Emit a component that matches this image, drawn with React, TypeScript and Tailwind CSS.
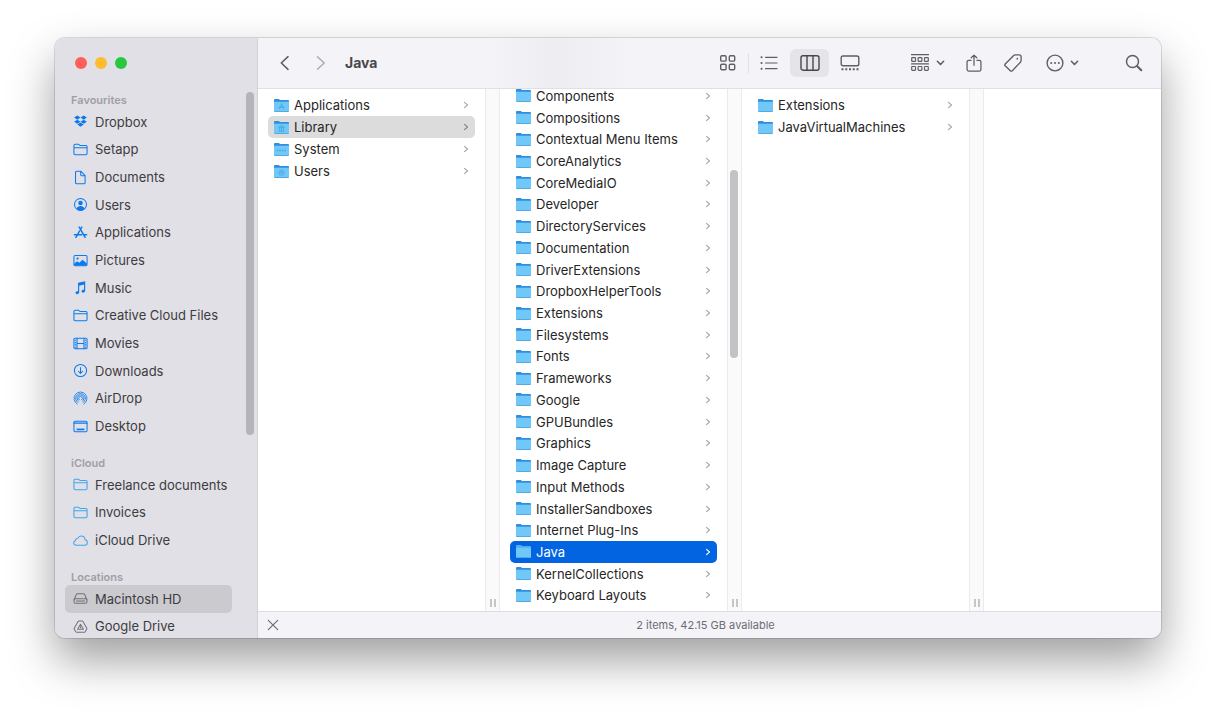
import type { ReactNode } from "react";
import clsx from "clsx";

type IconProps = { className?: string };
type FolderGlyph = "apps" | "library" | "system" | "users";
type Entry = { name: string; glyph?: FolderGlyph };

function Stroke({ className, children, box = 16, width = 1.1 }: IconProps & { children: ReactNode; box?: number; width?: number }) {
  return (
    <svg
      viewBox={`0 0 ${box} ${box}`}
      className={className}
      fill="none"
      stroke="currentColor"
      strokeWidth={width}
      strokeLinecap="round"
      strokeLinejoin="round"
      aria-hidden="true"
    >
      {children}
    </svg>
  );
}

const DropboxIcon = (p: IconProps) => (
  <svg viewBox="0 0 16 16" className={p.className} fill="currentColor" aria-hidden="true">
    <path d="M4.6 1.6 8 3.8 4.6 6 1.2 3.8zM11.4 1.6 14.8 3.8 11.4 6 8 3.8zM4.6 6.1 8 8.3 4.6 10.5 1.2 8.3zM11.4 6.1 14.8 8.3 11.4 10.5 8 8.3zM4.6 11.3 8 9.1l3.4 2.2L8 13.5z" />
  </svg>
);

const FolderOutline = (p: IconProps) => (
  <Stroke {...p}>
    <path d="M1 4V12.3c0 .8.4 1.2 1.2 1.2H13.8c.8 0 1.2-.4 1.2-1.2V4.9c0-.8-.4-1.2-1.2-1.2H7.4L6 2.5H2.2C1.4 2.5 1 2.9 1 3.7zM1 6.2H15" />
  </Stroke>
);

const DocIcon = (p: IconProps) => (
  <Stroke {...p}>
    <path d="M3.9 1.3H8.3L12.9 6V13.5c0 .8-.4 1.2-1.2 1.2H3.9c-.8 0-1.2-.4-1.2-1.2V2.5c0-.8.4-1.2 1.2-1.2zM8.2 1.5V5.1c0 .7.3 1 1 1h3.5" />
  </Stroke>
);

const UserIcon = (p: IconProps) => (
  <Stroke {...p}>
    <circle cx="8" cy="8" r="6.4" />
    <circle cx="8" cy="6.3" r="2.4" fill="currentColor" stroke="none" />
    <path d="M3.6 12.4C4.3 10.4 6 9.5 8 9.5s3.7.9 4.4 2.9C11.2 13.7 9.7 14.4 8 14.4s-3.2-.7-4.4-2z" fill="currentColor" stroke="none" />
  </Stroke>
);

const AppsIcon = (p: IconProps) => (
  <Stroke {...p} width={1.6}>
    <path d="M6.6 2.2 12.9 13.3M9.4 2.2 8 4.6M7 6.4 3.1 13.3M1.5 10.4H9.2M12.2 10.4H14.5" />
  </Stroke>
);

const PicturesIcon = (p: IconProps) => (
  <Stroke {...p}>
    <rect x="1" y="2.7" width="14" height="10.8" rx="1.2" />
    <circle cx="4.8" cy="5.9" r="1.2" fill="currentColor" stroke="none" />
    <path d="M1.2 13V11.5L4.4 8.7 6.6 10.5 10.2 7.2 14.8 11.2V13.3H1.4z" fill="currentColor" stroke="none" />
  </Stroke>
);

const MusicIcon = (p: IconProps) => (
  <svg viewBox="0 0 16 16" className={p.className} fill="currentColor" aria-hidden="true">
    <path d="M5.4 3 13 1.2v10c0 1.4-1 2.3-2.3 2.3-1 0-1.6-.6-1.6-1.4 0-1 .8-1.5 1.8-1.7.7-.1.9-.3.9-.9V4.8L6.6 6v6.8c0 1.4-1 2.3-2.3 2.3-1 0-1.6-.6-1.6-1.4 0-1 .8-1.5 1.8-1.7.7-.1.9-.3.9-.9z" />
  </svg>
);

const MoviesIcon = (p: IconProps) => (
  <Stroke {...p}>
    <rect x="1" y="2.4" width="14" height="11.2" rx="1.2" />
    <path d="M4.3 2.4V13.6M11.7 2.4V13.6M4.3 8H11.7" />
    <path d="M2.7 3.9V12.8M13.3 3.9V12.8" strokeWidth="1.4" strokeDasharray="1.2 1.3" strokeLinecap="butt" />
  </Stroke>
);

const DownloadsIcon = (p: IconProps) => (
  <Stroke {...p}>
    <circle cx="8" cy="8" r="6.5" />
    <path d="M8 4.7V11M5.6 8.8 8 11.1l2.4-2.3" />
  </Stroke>
);

const AirDropIcon = (p: IconProps) => (
  <Stroke {...p} width={0.9}>
    <path d="M4.4 13.9A6.9 6.9 0 1 1 11.6 13.9M5.1 12.3A5.2 5.2 0 1 1 10.9 12.3M5.9 10.8A3.6 3.6 0 1 1 10.1 10.8M6.7 9.4A2 2 0 1 1 9.3 9.4" />
  </Stroke>
);

const DesktopIcon = (p: IconProps) => (
  <Stroke {...p}>
    <rect x="1" y="2.5" width="14" height="11" rx="1.2" />
    <path d="M1 4.4H15" />
    <path d="M3.8 11.1H12.2" strokeWidth="1.8" strokeLinecap="butt" />
  </Stroke>
);

const CloudIcon = (p: IconProps) => (
  <Stroke {...p}>
    <path d="M3.6 13C1.9 13 .7 11.9.7 10.4c0-1.300.8-2.200 2-2.500C2.800 6.500 3.800 5.600 5.100 5.700 5.800 4.200 7.100 3.300 8.700 3.300c2.300 0 4 1.700 4.100 4 1.500.2 2.500 1.300 2.500 2.800 0 1.700-1.200 2.900-2.900 2.900z" />
  </Stroke>
);

const DiskIcon = (p: IconProps) => (
  <Stroke {...p}>
    <path d="M1.2 9.3 3.3 4.2C3.6 3.4 4.2 3 5 3H11c.8 0 1.4.4 1.7 1.2L14.8 9.3" />
    <rect x="1.1" y="8.3" width="13.8" height="4.7" rx="1.5" />
    <path d="M3.600 10.700H12.400" />
  </Stroke>
);

const DriveIcon = (p: IconProps) => (
  <Stroke {...p}>
    <path d="M6.3 2.2H9.7c.4 0 .7.2.9.5L14.7 9.900c.2.3.2.7 0 1L13 13.600c-.2.3-.5.5-.9.5H3.900c-.4 0-.7-.2-.9-.5L1.300 10.900c-.2-.3-.2-.7 0-1L5.400 2.700c.2-.3.5-.5.9-.5z" />
    <path d="M8 5.700 4.900 11H11.100zM8 8.400v.8" />
  </Stroke>
);

const FAVOURITES = [
  { name: "Dropbox", icon: DropboxIcon },
  { name: "Setapp", icon: FolderOutline },
  { name: "Documents", icon: DocIcon },
  { name: "Users", icon: UserIcon },
  { name: "Applications", icon: AppsIcon },
  { name: "Pictures", icon: PicturesIcon },
  { name: "Music", icon: MusicIcon },
  { name: "Creative Cloud Files", icon: FolderOutline },
  { name: "Movies", icon: MoviesIcon },
  { name: "Downloads", icon: DownloadsIcon },
  { name: "AirDrop", icon: AirDropIcon },
  { name: "Desktop", icon: DesktopIcon },
];

const ICLOUD = [
  { name: "Freelance documents", icon: FolderOutline },
  { name: "Invoices", icon: FolderOutline },
  { name: "iCloud Drive", icon: CloudIcon },
];

const LOCATIONS = [
  { name: "Macintosh HD", icon: DiskIcon },
  { name: "Google Drive", icon: DriveIcon },
];

const ROOT: Entry[] = [
  { name: "Applications", glyph: "apps" },
  { name: "Library", glyph: "library" },
  { name: "System", glyph: "system" },
  { name: "Users", glyph: "users" },
];

// the last folder only peeks over the status bar, its name is out of view
const LIBRARY: Entry[] = [
  "Components", "Compositions", "Contextual Menu Items", "CoreAnalytics", "CoreMediaIO",
  "Developer", "DirectoryServices", "Documentation", "DriverExtensions", "DropboxHelperTools",
  "Extensions", "Filesystems", "Fonts", "Frameworks", "Google", "GPUBundles", "Graphics",
  "Image Capture", "Input Methods", "InstallerSandboxes", "Internet Plug-Ins", "Java",
  "KernelCollections", "Keyboard Layouts", "",
].map((name) => ({ name }));

const JAVA: Entry[] = [{ name: "Extensions" }, { name: "JavaVirtualMachines" }];

function FolderIcon({ glyph, selected }: { glyph?: FolderGlyph; selected?: boolean }) {
  return (
    <svg viewBox="0 0 15 13" className="h-[13px] w-[15px] shrink-0" aria-hidden="true">
      <path d="M0 1.2C0 .4.4 0 1.2 0H4.3c.5 0 .8.1 1.1.4l.6.5H13.800c.8 0 1.200.4 1.200 1.200V11H0z" fill={selected ? "#4fb0ee" : "#2f8ee0"} />
      <path d="M0 2.800H15V11.700c0 .8-.4 1.300-1.200 1.300H1.200C.4 13 0 12.500 0 11.700z" fill="#6fc8f8" />
      <path d="M.2 12.100c.2.600.5.900 1 .9H13.800c.5 0 .8-.3 1-.9z" fill="#55a9dc" />
      <g fill="none" stroke="#45a2de" strokeWidth="0.8" strokeLinecap="round">
        {glyph === "apps" && <path d="M7.800 5 5.600 9.500M7.300 5 9.500 9.500M5 8.300H10" />}
        {glyph === "library" && <path d="M5 6.100 7.500 4.700 10 6.100zM5.700 7v2.300M7.500 7v2.300M9.300 7v2.300M5 10.300H10" />}
        {glyph === "system" && <path d="M2.800 7.600H12.200" strokeDasharray="1.4 1.1" strokeWidth="1.5" strokeLinecap="butt" />}
        {glyph === "users" && <path d="M5.400 9.600A2.700 2.700 0 1 1 9.600 9.600M6.700 7.400a.8.8 0 1 1 1.600 0 .8.8 0 1 1-1.600 0M6.400 10.200c.2-1 2-1 2.200 0" />}
      </g>
    </svg>
  );
}

function ChevronRight({ className }: IconProps) {
  return (
    <svg viewBox="0 0 6 8" className={clsx("h-2 w-1.5 shrink-0", className)} fill="none" stroke="currentColor" strokeWidth="1.1" strokeLinecap="round" strokeLinejoin="round" aria-hidden="true">
      <path d="M1.500 1.400 4.500 4 1.500 6.600" />
    </svg>
  );
}

function ChevronDown() {
  return (
    <svg viewBox="0 0 9 6" className="h-1.5 w-[9px]" fill="none" stroke="currentColor" strokeWidth="1.6" strokeLinecap="round" strokeLinejoin="round" aria-hidden="true">
      <path d="M1.400 1.300 4.500 4.500 7.600 1.300" />
    </svg>
  );
}

function FileRow({ entry, state }: { entry: Entry; state?: "path" | "active" }) {
  return (
    <li className="min-h-0">
      <button
        type="button"
        className={clsx(
          "flex h-full w-full items-center gap-[5px] rounded-[5px] px-1.5 text-left",
          state === "path" && "bg-[#dcdcdc]",
          state === "active" && "bg-[#0264e1] text-white",
        )}
      >
        <FolderIcon glyph={entry.glyph} selected={state === "active"} />
        <span className="grow truncate">{entry.name}</span>
        <ChevronRight className={state === "active" ? "text-white" : state === "path" ? "text-[#808080]" : "text-[#a4a4a8]"} />
      </button>
    </li>
  );
}

function Column({ label, children }: { label: string; children: ReactNode }) {
  return (
    <section aria-label={label} className="w-[227px] shrink-0 overflow-hidden px-2.5">
      {children}
    </section>
  );
}

function Resizer({ children }: { children?: ReactNode }) {
  return (
    <div className="relative flex w-[15px] shrink-0 items-end justify-center gap-0.5 border-x border-[#ebebed] bg-[#fafafa] pb-1">
      <span className="h-2 w-0.5 bg-[#c6c6c8]" />
      <span className="h-2 w-0.5 bg-[#c6c6c8]" />
      {children}
    </div>
  );
}

type SidebarSectionProps = {
  title: string;
  items: { name: string; icon: (p: IconProps) => ReactNode }[];
  listClass: string;
  iconClass: string;
  selected?: string;
};

function SidebarSection({ title, items, listClass, iconClass, selected }: SidebarSectionProps) {
  return (
    <section className="shrink-0">
      <h2 className="pl-4 text-[11px] leading-4 font-semibold text-[#a09fa4]">{title}</h2>
      <ul className={clsx("grid auto-rows-fr pr-[25px] pl-2.5", listClass)}>
        {items.map(({ name, icon: Icon }) => (
          <li key={name} className="min-h-0">
            <a
              href="#"
              className={clsx("flex h-full items-center gap-[7px] rounded-[5px] pl-2", name === selected && "bg-[#cbcacf]")}
            >
              <Icon className={clsx("h-[15px] w-[15px] shrink-0", iconClass)} />
              {name}
            </a>
          </li>
        ))}
      </ul>
    </section>
  );
}

function Sidebar() {
  return (
    <aside className="relative flex w-[203px] shrink-0 flex-col overflow-hidden border-r border-[#d3d2d7] bg-[#e1e0e6] text-[#3d3c40]">
      <div className="flex h-[54px] shrink-0 items-start gap-2 pt-[19px] pl-5">
        <button type="button" aria-label="Close" className="h-3 w-3 rounded-full bg-[#fe5f57]" />
        <button type="button" aria-label="Minimise" className="h-3 w-3 rounded-full bg-[#febb2e]" />
        <button type="button" aria-label="Zoom" className="h-3 w-3 rounded-full bg-[#29c73f]" />
      </div>
      <nav className="flex flex-col gap-[15px]">
        <SidebarSection title="Favourites" items={FAVOURITES} listClass="h-[332px]" iconClass="text-[#0a7aee]" />
        <SidebarSection title="iCloud" items={ICLOUD} listClass="h-[83px]" iconClass="text-[#3fa5ee]" />
        <SidebarSection title="Locations" items={LOCATIONS} listClass="h-[55px]" iconClass="text-[#727176]" selected="Macintosh HD" />
      </nav>
      <div className="absolute top-[54px] right-[3px] h-[343px] w-2 rounded-full bg-[#b5b4b9]" />
    </aside>
  );
}

function Toolbar() {
  return (
    <header className="flex h-[51px] shrink-0 items-center border-b border-[#e0dfe4] bg-linear-to-r from-[#f4f3f8] from-25% via-[#eeeef2] via-33% to-[#f4f3f8] to-42% pr-[18px] pl-[19px] text-[#5f5e63]">
      <button type="button" aria-label="Back">
        <Stroke className="h-4 w-4" width={1.6}>
          <path d="M11 1.700 4.300 8 11 14.300" />
        </Stroke>
      </button>
      <button type="button" aria-label="Forward" className="ml-5 text-[#a9a8ad]">
        <Stroke className="h-4 w-4" width={1.4}>
          <path d="M4.500 1.700 11.200 8 4.500 14.300" />
        </Stroke>
      </button>
      <h1 className="ml-4 text-[14px] font-bold text-[#48474b]">Java</h1>

      {/* View switcher */}
      <div className="ml-auto flex items-center">
        <button type="button" aria-label="Icons">
          <Stroke className="h-[18px] w-[18px]" box={18} width={1.4}>
            <rect x="1.700" y="1.700" width="5.400" height="5.400" rx="1.200" />
            <rect x="10.300" y="1.700" width="5.400" height="5.400" rx="1.200" />
            <rect x="1.700" y="10.300" width="5.400" height="5.400" rx="1.200" />
            <rect x="10.300" y="10.300" width="5.400" height="5.400" rx="1.200" />
          </Stroke>
        </button>
        <span className="mx-[11px] h-5 w-px bg-[#e2e1e6]" />
        <button type="button" aria-label="List">
          <Stroke className="h-[18px] w-[18px]" box={18} width={1.2}>
            <path d="M5.500 3.300H17M5.500 9H17M5.500 14.700H17" />
            <path d="M1.500 3.300h.1M1.500 9h.1M1.500 14.700h.1" strokeWidth="2" />
          </Stroke>
        </button>
        <button type="button" aria-label="Columns" aria-pressed="true" className="ml-3 flex h-7 w-[39px] items-center justify-center rounded-md bg-[#e5e4e9] text-[#48474b]">
          <Stroke className="h-5 w-5" box={20} width={1.4}>
            <rect x="1" y="2.800" width="18" height="14.400" rx="2" />
            <path d="M7 3V17M13 3V17" />
          </Stroke>
        </button>
        <button type="button" aria-label="Gallery" className="ml-[11px]">
          <Stroke className="h-5 w-5" box={20} width={1.4}>
            <rect x="1.200" y="3" width="17.600" height="9.800" rx="1.800" />
            <path d="M1.500 16.300H18.500" strokeWidth="2" strokeDasharray="2 1.750" strokeLinecap="butt" />
          </Stroke>
        </button>
      </div>

      <button type="button" aria-label="Group" className="ml-[50px] flex items-center gap-1.5">
        <Stroke className="h-5 w-5" box={20} width={1.2}>
          <path d="M1.500 1.700H18.500M1.500 10.900H18.500" />
          <rect x="1.700" y="4.600" width="3.800" height="3.800" rx=".7" />
          <rect x="8.100" y="4.600" width="3.800" height="3.800" rx=".7" />
          <rect x="14.500" y="4.600" width="3.800" height="3.800" rx=".7" />
          <rect x="1.700" y="13.500" width="3.800" height="3.800" rx=".7" />
          <rect x="8.100" y="13.500" width="3.800" height="3.800" rx=".7" />
          <rect x="14.500" y="13.500" width="3.800" height="3.800" rx=".7" />
        </Stroke>
        <ChevronDown />
      </button>
      <button type="button" aria-label="Share" className="ml-5">
        <Stroke className="h-5 w-[18px]" box={20} width={1.4}>
          <path d="M6.800 7H4C3 7 2.300 7.700 2.300 8.700V17.300c0 1 .7 1.700 1.700 1.700H16c1 0 1.700-.7 1.700-1.700V8.700C17.700 7.700 17 7 16 7H13.200M10 12.500V1.300M6.900 4.200 10 1.200l3.100 3" />
        </Stroke>
      </button>
      <button type="button" aria-label="Tags" className="ml-[21px]">
        <Stroke className="h-[18px] w-[18px]" box={18} width={1.3}>
          <path d="M1.200 10 9.700 1.500c.4-.4.900-.6 1.500-.6L15 .9c1.200 0 2.100.9 2.100 2.100V6.600c0 .7-.2 1.200-.7 1.700L8.300 16.700c-.6.600-1.400.6-2 0L1.200 11.800c-.5-.5-.5-1.300 0-1.800z" />
          <circle cx="13.300" cy="4.700" r=".9" fill="currentColor" stroke="none" />
        </Stroke>
      </button>
      <button type="button" aria-label="More" className="ml-6 flex items-center gap-1.5">
        <Stroke className="h-[18px] w-[18px]" box={18} width={1.4}>
          <circle cx="9" cy="9" r="7.900" />
          <path d="M5.200 9h.01M9 9h.01M12.800 9h.01" strokeWidth="2" />
        </Stroke>
        <ChevronDown />
      </button>
      <button type="button" aria-label="Search" className="ml-[46px]">
        <Stroke className="h-[18px] w-[18px]" box={18} width={1.5}>
          <circle cx="7.500" cy="7.500" r="6" />
          <path d="M12 12l4.300 4.300" strokeWidth="2" />
        </Stroke>
      </button>
    </header>
  );
}

function App() {
  return (
    <div className="flex h-screen bg-white px-[55px] pt-[38px] pb-[74px] font-['Inter','Liberation_Sans',sans-serif] text-[13px] leading-4">
      <div className="flex min-w-0 grow overflow-hidden rounded-[10px] bg-white shadow-[0_22px_46px_rgba(0,0,0,0.38),0_0_0_1px_rgba(0,0,0,0.12)]">
        <Sidebar />
        <div className="flex min-w-0 grow flex-col">
          <Toolbar />

          {/* Column browser */}
          <main className="flex min-h-0 grow overflow-hidden text-[#262626]">
            <Column label="Macintosh HD">
              <ul className="grid auto-rows-[22px] pt-[5px]">
                {ROOT.map((entry) => (
                  <FileRow key={entry.name} entry={entry} state={entry.name === "Library" ? "path" : undefined} />
                ))}
              </ul>
            </Column>
            <Resizer />
            <Column label="Library">
              <ul className="-mt-1 grid h-[543px] auto-rows-fr">
                {LIBRARY.map((entry) => (
                  <FileRow key={entry.name} entry={entry} state={entry.name === "Java" ? "active" : undefined} />
                ))}
              </ul>
            </Column>
            <Resizer>
              <div className="absolute top-[81px] right-[3px] h-[188px] w-2 rounded-full bg-[#c3c3c5]" />
            </Resizer>
            <Column label="Java">
              <ul className="grid auto-rows-[22px] pt-[5px]">
                {JAVA.map((entry) => (
                  <FileRow key={entry.name} entry={entry} />
                ))}
              </ul>
            </Column>
            <Resizer />
          </main>

          <footer className="flex h-[27px] shrink-0 items-center border-t border-[#dddce1] bg-[#f4f3f8] px-[9px] text-[11px] text-[#6d6c71]">
            <button type="button" aria-label="Stop">
              <Stroke className="h-3 w-3" box={12} width={1.2}>
                <path d="M1.300 1.300 10.700 10.700M10.700 1.300 1.300 10.700" />
              </Stroke>
            </button>
            <p className="grow pr-5 text-center">2 items, 42.15 GB available</p>
          </footer>
        </div>
      </div>
    </div>
  );
}

export default App;
